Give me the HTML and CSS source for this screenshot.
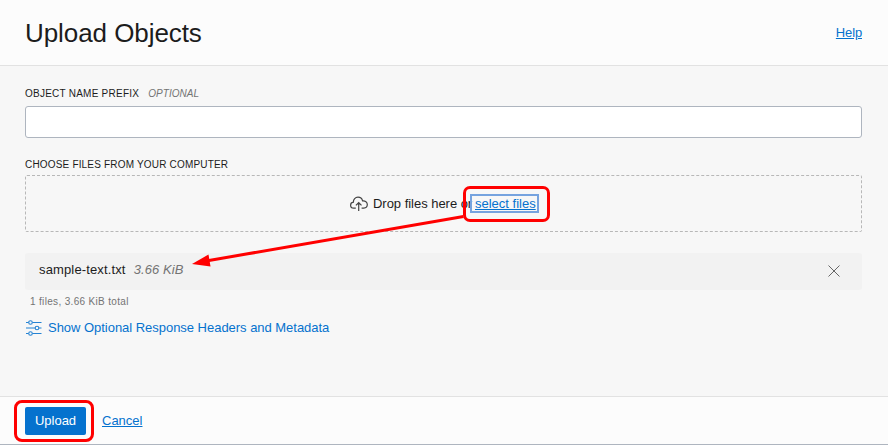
FILE: index.html
```html
<!DOCTYPE html>
<html lang="en">
<head>
<meta charset="utf-8">
<title>Upload Objects</title>
<link rel="stylesheet" href="styles.css">
</head>
<body>
<div class="dialog">
  <header class="header">
    <h1 class="title">Upload Objects</h1>
    <a class="link help" href="#">Help</a>
  </header>
  <main class="content">
    <label class="label" for="prefix"><span class="label-prefix">Object Name Prefix</span><em class="optional">Optional</em></label>
    <input class="input" id="prefix" type="text">
    <div class="label label-files"><span>Choose Files from your Computer</span></div>
    <div class="dropzone">
      <svg class="cloud" width="20" height="16" viewBox="0 0 20 16"><path d="M6.8 12.1H4.8C2.9 12.1 1.6 10.9 1.6 9.2C1.6 7.5 2.8 6.4 4.4 6.2C4.2 3.2 6.4 1.2 9 1.2C11.4 1.2 13 2.5 13.6 4.9C16.3 4.6 18.3 6.2 18.3 8.6C18.3 10.8 16.8 12.1 14.8 12.1H12.6M9.7 14.9V6.7M6.9 9.4L9.7 6.5L12.5 9.4"/></svg>
      <span class="drop-text">Drop files here or</span>
      <a class="link select" href="#"><span>select files</span></a>
    </div>
    <div class="file">
      <span class="file-name">sample-text.txt</span>
      <em class="file-size">3.66 KiB</em>
      <svg class="close" width="12" height="12" viewBox="0 0 12 12"><path d="M.5 .5L11.5 11.5M11.5 .5L.5 11.5"/></svg>
    </div>
    <div class="total"><span>1 files, 3.66 KiB total</span></div>
    <a class="metadata" href="#">
      <svg class="sliders" width="17" height="16" viewBox="0 0 17 16"><path d="M1 2.5H3.5M7.5 2.5H16.5M1 8H10M14 8H16.5M1 13.5H3.5M7.5 13.5H16.5"/><circle cx="5.5" cy="2.5" r="1.8"/><circle cx="12" cy="8" r="1.8"/><circle cx="5.5" cy="13.5" r="1.8"/></svg>
      <span class="metadata-text">Show Optional Response Headers and Metadata</span>
    </a>
  </main>
  <footer class="footer">
    <button class="upload" type="button"><span>Upload</span></button>
    <a class="link cancel" href="#">Cancel</a>
  </footer>
</div>
<svg class="callouts" width="888" height="445" viewBox="0 0 888 445">
  <rect x="464.5" y="187.5" width="84" height="33" rx="5.5"/>
  <rect x="15.5" y="401.5" width="77" height="39" rx="6.5"/>
  <path d="M463.5 216.5L206 261"/>
  <polygon points="192,264 208.5,254.5 210.5,266.5"/>
</svg>
</body>
</html>
```
FILE: styles.css
```css
* { box-sizing: border-box; }
body {
  margin: 0;
  font-family: "Liberation Sans", Arial, sans-serif;
  font-size: 13px;
  line-height: 16px;
  color: #1c1c1c;
  background: #f7f7f7;
}
.dialog {
  display: flex;
  flex-direction: column;
  height: 445px;
  border-bottom: 1px solid #aeb5bf;
}
.header {
  display: flex;
  align-items: center;
  justify-content: space-between;
  height: 66px;
  padding: 0 26px 0 25px;
  background: #fcfcfc;
  border-bottom: 1px solid #e2e2e2;
}
.title {
  margin: 0;
  font-size: 26px;
  line-height: 32px;
  font-weight: 400;
  letter-spacing: -.07px;
}
.link { color: #0572ce; text-decoration: underline; }
.help { letter-spacing: -.15px; }
.content {
  flex: 1;
  display: flex;
  flex-direction: column;
  padding: 20px 26px 0 25px;
}
.label {
  display: flex;
  gap: 9px;
  height: 14px;
  margin-bottom: 6px;
  font-size: 10px;
  line-height: 15px;
  letter-spacing: .24px;
  text-transform: uppercase;
  white-space: nowrap;
}
.optional { color: #747474; letter-spacing: .06px; }
.input {
  width: 100%;
  height: 32px;
  border: 1px solid #aeb5bf;
  border-radius: 3px;
  background: #fff;
}
.label-files { margin: 19px 0 4px; letter-spacing: .18px; }
.dropzone {
  display: flex;
  align-items: center;
  height: 57px;
  padding-left: 323px;
  border: 1px dashed #b8b8b8;
  border-radius: 2px;
  white-space: nowrap;
}
.drop-text { width: 97px; margin-left: 4px; letter-spacing: -.03px; }
.select {
  width: 69px;
  height: 19px;
  padding-left: 3px;
  line-height: 15px;
  border: 2px solid #76a3df;
}
.file {
  display: flex;
  align-items: center;
  height: 37px;
  margin-top: 21px;
  padding: 0 22px 4px 14px;
  background: #f2f2f2;
  border-radius: 3px;
}
.file-name { letter-spacing: .14px; }
.file-size { margin-left: 8px; color: #747474; letter-spacing: .08px; }
.close {
  margin: 3px 0 0 auto;
  fill: none;
  stroke: #666;
  stroke-width: 1;
}
.total {
  height: 14px;
  margin: 5px 0 0 5px;
  font-size: 10px;
  line-height: 14px;
  letter-spacing: .33px;
  color: #747474;
}
.metadata {
  display: flex;
  align-items: center;
  height: 18px;
  margin-top: 10px;
  color: #0572ce;
  text-decoration: none;
}
.metadata-text { margin-left: 6px; letter-spacing: -.03px; }
.cloud { fill: none; stroke: #444; stroke-width: 1.2; }
.sliders { fill: none; stroke: #2583d3; stroke-width: 1.1; }
.footer {
  display: flex;
  align-items: center;
  gap: 16px;
  height: 48px;
  padding-left: 25px;
  background: #fcfcfc;
  border-top: 1px solid #e2e2e2;
}
.upload {
  width: 61px;
  height: 28px;
  padding: 0;
  border: 0;
  border-radius: 2px;
  background: #0572ce;
  color: #fff;
  font: inherit;
}
.callouts {
  position: absolute;
  top: 0;
  left: 0;
  pointer-events: none;
  fill: none;
  stroke: #f00;
  stroke-width: 3;
}
.callouts polygon { fill: #f00; stroke: none; }
```
